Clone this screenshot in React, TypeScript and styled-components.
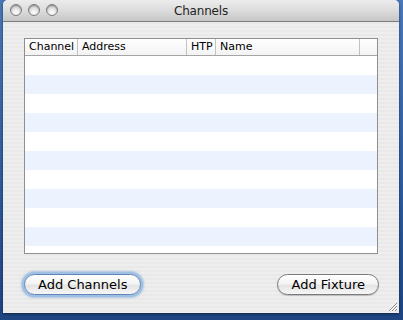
import styled, { createGlobalStyle } from 'styled-components';

const GlobalStyle = createGlobalStyle`
  html, body {
    margin: 0;
    padding: 0;
    background: linear-gradient(180deg, #4a78b8 0%, #2d5b9c 60%, #1e4582 100%);
    font-family: 'Lucida Grande', 'DejaVu Sans', 'Liberation Sans', sans-serif;
  }
  #root {
    width: 403px;
    height: 320px;
    overflow: hidden;
  }
`;

const Window = styled.div`
  position: relative;
  margin-left: 3px;
  width: 396px;
  height: 313px;
  border-radius: 5px 5px 0 0;
  overflow: hidden;
  display: flex;
  flex-direction: column;
  background: repeating-linear-gradient(
    180deg,
    #eeeeee 0px,
    #eeeeee 2px,
    #e9e9e9 2px,
    #e9e9e9 4px
  );
  box-shadow: 0 1px 3px rgba(0, 0, 0, 0.5);
`;

const TitleBar = styled.div`
  position: relative;
  height: 21px;
  flex: none;
  display: flex;
  align-items: center;
  justify-content: center;
  background: linear-gradient(180deg, #ececec 0%, #dcdcdc 50%, #c6c6c6 100%);
  border-bottom: 1px solid #7c7c7c;
`;

const Lights = styled.div`
  position: absolute;
  left: 7px;
  top: 4px;
  display: flex;
  gap: 6px;
`;

const Light = styled.span`
  box-sizing: border-box;
  width: 12px;
  height: 12px;
  border-radius: 50%;
  border: 1px solid #7d7d7d;
  background: radial-gradient(
    circle at 50% 75%,
    #ffffff 0%,
    #e2e2e2 45%,
    #a9a9a9 100%
  );
  box-shadow: inset 0 1px 1px rgba(0, 0, 0, 0.25);
`;

const Title = styled.span`
  font-size: 12px;
  color: #222;
  letter-spacing: -0.2px;
`;

const Body = styled.div`
  flex: 1;
  display: flex;
  flex-direction: column;
  padding: 16px 20px 0 21px;
`;

const Table = styled.div`
  height: 214px;
  margin-right: 1px;
  border: 1px solid #8f8f8f;
  background: #fff;
  overflow: hidden;
  display: flex;
  flex-direction: column;
`;

const Grid = styled.div`
  display: grid;
  grid-template-columns: 53px 109px 29px 144px 1fr;
`;

const HeaderRow = styled(Grid)`
  height: 16px;
  background: linear-gradient(180deg, #ffffff 0%, #f3f3f3 100%);
  border-bottom: 1px solid #a5a5a5;
`;

const HeaderCell = styled.div`
  font-size: 11px;
  line-height: 16px;
  color: #000;
  padding-left: 4px;
  border-right: 1px solid #c2c2c2;
  white-space: nowrap;
  overflow: hidden;
  &:last-child {
    border-right: none;
  }
`;

const Row = styled.div<{ alt: boolean }>`
  height: 19px;
  flex: none;
  background: ${p => (p.alt ? '#edf3fe' : '#ffffff')};
`;

const Buttons = styled.div`
  display: flex;
  justify-content: space-between;
  margin-top: 20px;
`;

const Button = styled.button<{ primary?: boolean }>`
  height: 21px;
  padding: 0 13px;
  border-radius: 11px;
  font-family: inherit;
  font-size: 13px;
  color: #000;
  border: 1px solid ${p => (p.primary ? '#5f86b6' : '#7a7a7a')};
  background: linear-gradient(
    180deg,
    #ffffff 0%,
    #f4f4f4 45%,
    #e4e4e4 55%,
    #f6f6f6 100%
  );
  box-shadow: ${p =>
    p.primary
      ? '0 0 0 2px #9fbfe3, 0 0 2px 3px rgba(110, 160, 215, 0.5)'
      : '0 1px 1px rgba(0, 0, 0, 0.2)'};
  cursor: default;
`;

const Grip = styled.svg`
  position: absolute;
  right: 1px;
  bottom: 1px;
`;

const columns = ['Channel', 'Address', 'HTP', 'Name', ''];

export default function App() {
  const rows = Array.from({ length: 11 }, (_, i) => i);
  return (
    <>
      <GlobalStyle />
      <Window>
        <TitleBar>
          <Lights>
            <Light />
            <Light />
            <Light />
          </Lights>
          <Title>Channels</Title>
        </TitleBar>
        <Body>
          <Table>
            <HeaderRow>
              {columns.map((c, i) => (
                <HeaderCell key={i}>{c}</HeaderCell>
              ))}
            </HeaderRow>
            {rows.map(i => (
              <Row key={i} alt={i % 2 === 1} />
            ))}
          </Table>
          <Buttons>
            <Button primary>Add Channels</Button>
            <Button>Add Fixture</Button>
          </Buttons>
        </Body>
        <Grip width="12" height="12" viewBox="0 0 12 12">
          <path d="M11 3 L3 11 M11 6 L6 11 M11 9 L9 11" stroke="#8a8a8a" strokeWidth="1" />
          <path d="M11 4 L4 11 M11 7 L7 11" stroke="#ffffff" strokeWidth="1" />
        </Grip>
      </Window>
    </>
  );
}
